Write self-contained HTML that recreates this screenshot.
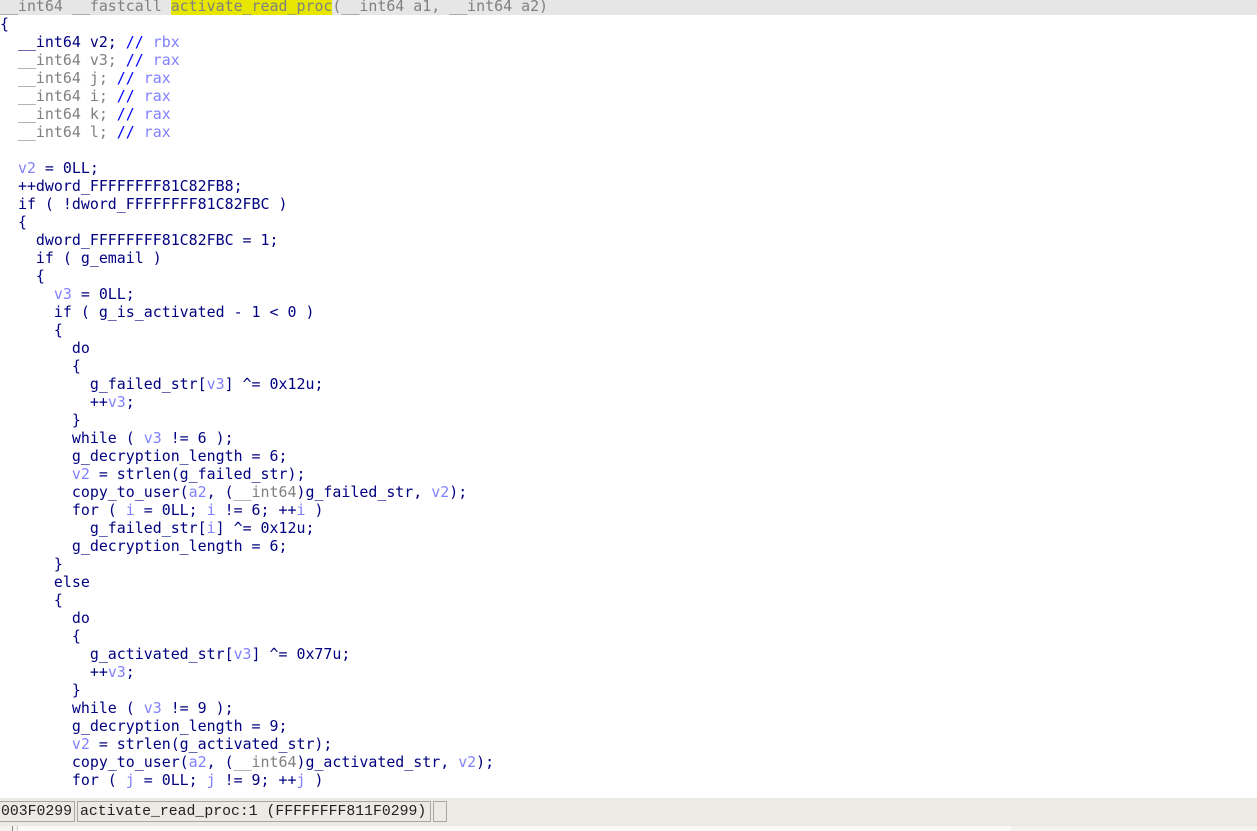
<!DOCTYPE html><html><head><style>
body{margin:0;width:1257px;height:831px;overflow:hidden;background:#fff;position:relative;font-family:"DejaVu Sans Mono",monospace;}
#hdr{position:absolute;left:0;top:0;width:1257px;height:15px;background:#e6e6e6;}
pre{position:absolute;left:0;top:-3px;margin:0;font-family:"DejaVu Sans Mono",monospace;font-size:14.93px;line-height:18px;color:#000080;letter-spacing:0;}
.g{color:#808080}.v{color:#8080ff}.c{color:#0000ff}.h{background:#e6e600}
#sb{position:absolute;left:0;top:798px;width:1257px;height:28px;background:#edeae5;}
.bx{position:absolute;top:3px;height:21px;border:1px solid #a9a6a0;font-family:"Liberation Mono",monospace;font-size:14.8px;line-height:21px;color:#222;padding-left:2px;box-sizing:border-box;white-space:nowrap}
#bt{position:absolute;left:0;top:826px;width:1257px;height:5px;background:#f4f2ef}
</style></head><body>
<div id="hdr"></div>
<pre><span class="g">__int64 __fastcall <span class="h">activate_read_proc</span>(__int64 a1, __int64 a2)</span>
{
  __int64 v2; <span class="c">//</span> <span class="v">rbx</span>
  <span class="g">__int64 v3;</span> <span class="c">//</span> <span class="v">rax</span>
  <span class="g">__int64 j;</span> <span class="c">//</span> <span class="v">rax</span>
  <span class="g">__int64 i;</span> <span class="c">//</span> <span class="v">rax</span>
  <span class="g">__int64 k;</span> <span class="c">//</span> <span class="v">rax</span>
  <span class="g">__int64 l;</span> <span class="c">//</span> <span class="v">rax</span>

  <span class="v">v2</span> = 0LL;
  ++dword_FFFFFFFF81C82FB8;
  if ( !dword_FFFFFFFF81C82FBC )
  {
    dword_FFFFFFFF81C82FBC = 1;
    if ( g_email )
    {
      <span class="v">v3</span> = 0LL;
      if ( g_is_activated - 1 &lt; 0 )
      {
        do
        {
          g_failed_str[<span class="v">v3</span>] ^= 0x12u;
          ++<span class="v">v3</span>;
        }
        while ( <span class="v">v3</span> != 6 );
        g_decryption_length = 6;
        <span class="v">v2</span> = strlen(g_failed_str);
        copy_to_user(<span class="v">a2</span>, (<span class="g">__int64</span>)g_failed_str, <span class="v">v2</span>);
        for ( <span class="v">i</span> = 0LL; <span class="v">i</span> != 6; ++<span class="v">i</span> )
          g_failed_str[<span class="v">i</span>] ^= 0x12u;
        g_decryption_length = 6;
      }
      else
      {
        do
        {
          g_activated_str[<span class="v">v3</span>] ^= 0x77u;
          ++<span class="v">v3</span>;
        }
        while ( <span class="v">v3</span> != 9 );
        g_decryption_length = 9;
        <span class="v">v2</span> = strlen(g_activated_str);
        copy_to_user(<span class="v">a2</span>, (<span class="g">__int64</span>)g_activated_str, <span class="v">v2</span>);
        for ( <span class="v">j</span> = 0LL; <span class="v">j</span> != 9; ++<span class="v">j</span> )</pre>
<div id="sb">
<div class="bx" style="left:-1px;width:76px;border-left:none">003F0299</div>
<div class="bx" style="left:77px;width:354px">activate_read_proc:1 (FFFFFFFF811F0299)</div>
<div class="bx" style="left:433px;width:14px"></div>
</div>
<div id="bt"><div style="position:absolute;left:12px;top:0;width:1px;height:5px;background:#888"></div><div style="position:absolute;left:17px;top:0;width:993px;height:5px;background:#fbfaf8;border-left:1px solid #ccc"></div></div>
</body></html>
